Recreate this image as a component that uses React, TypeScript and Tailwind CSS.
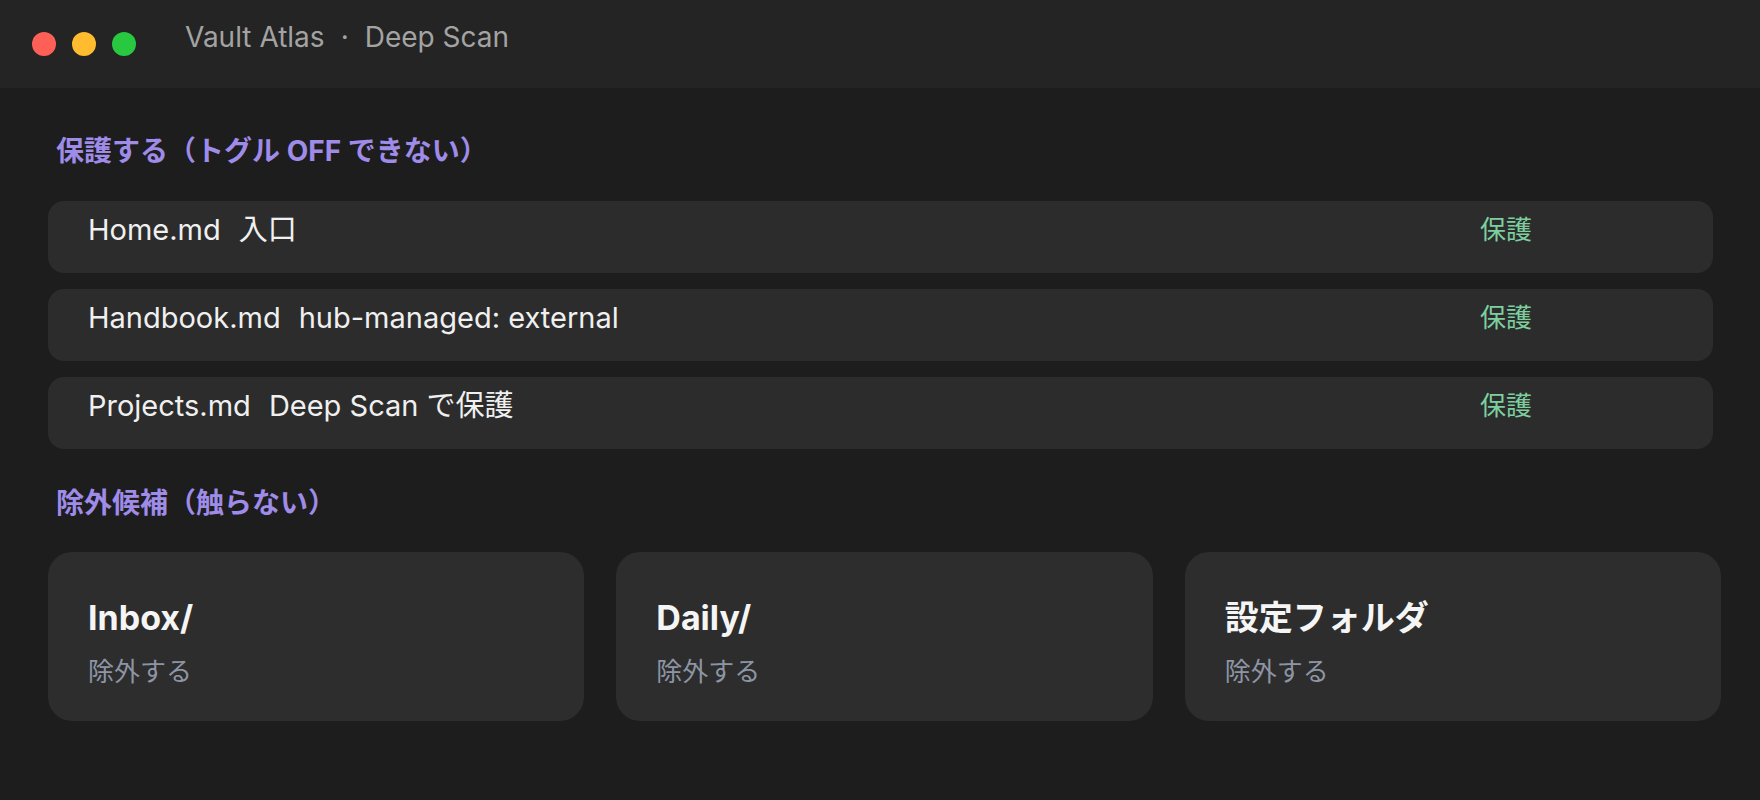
import React from 'react';

const protectedRows = [
  { name: 'Home.md', note: '入口' },
  { name: 'Handbook.md', note: 'hub-managed: external' },
  { name: 'Projects.md', note: 'Deep Scan で保護' },
];

const excluded = ['Inbox/', 'Daily/', '設定フォルダ'];

function TitleBar() {
  return (
    <div className="h-[88px] bg-[#242424] flex items-center pl-8">
      <div className="flex items-center gap-4">
        <span className="w-6 h-6 rounded-full bg-[#fe5f57]" />
        <span className="w-6 h-6 rounded-full bg-[#febc2e]" />
        <span className="w-6 h-6 rounded-full bg-[#28c840]" />
      </div>
      <div className="ml-[49px] mb-[14px] text-[28px] leading-[36px] text-[#a3a3a3] flex items-center">
        <span>Vault Atlas</span>
        <span className="mx-[16px]">·</span>
        <span>Deep Scan</span>
      </div>
    </div>
  );
}

function SectionHeading({ children }: { children: React.ReactNode }) {
  return (
    <h2 className="pl-2 text-[28px] leading-[36px] font-bold text-[#9f8be8]">{children}</h2>
  );
}

export default function App() {
  return (
    <div className="min-h-[800px] bg-[#1d1d1d] font-[Inter,'Noto_Sans_CJK_JP',sans-serif]">
      <TitleBar />

      <main className="pt-[45px] pl-12 pr-[39px]">
        <SectionHeading>保護する（トグル OFF できない）</SectionHeading>

        <div className="mt-8 mr-2 flex flex-col gap-4">
          {protectedRows.map((r) => (
            <div
              key={r.name}
              className="h-[72px] rounded-2xl bg-[#2c2c2c] pl-10 pr-[181px] pt-[11px] flex items-start justify-between"
            >
              <div className="text-[29px] leading-[36px] text-[#f0f0f0]">
                {r.name}
                <span className="ml-[18px]">{r.note}</span>
              </div>
              <span className="text-[26px] leading-[36px] text-[#7dcf9f]">保護</span>
            </div>
          ))}
        </div>

        <div className="mt-9">
          <SectionHeading>除外候補（触らない）</SectionHeading>
        </div>

        <div className="mt-[31px] grid grid-cols-3 gap-8">
          {excluded.map((name) => (
            <div key={name} className="h-[169px] rounded-3xl bg-[#2d2d2d] px-10 pt-[46px]">
              <div className="text-[34px] leading-[40px] font-bold text-[#f5f5f5]">{name}</div>
              <div className="mt-[17px] text-[26px] leading-[34px] text-[#8d95a5]">除外する</div>
            </div>
          ))}
        </div>
      </main>
    </div>
  );
}
